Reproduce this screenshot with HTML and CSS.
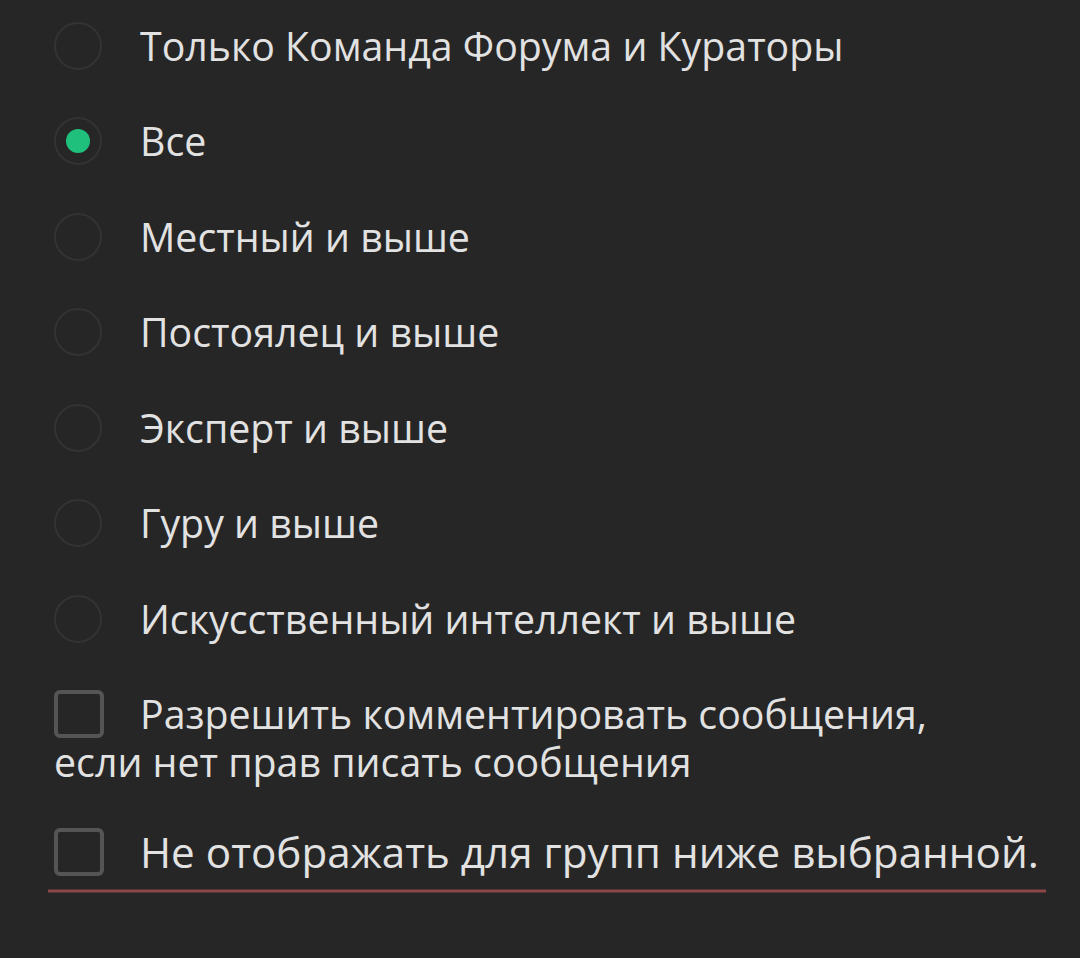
FILE: index.html
```html
<!DOCTYPE html>
<html lang="ru">
<head>
  <meta charset="UTF-8" />
  <meta name="viewport" content="width=device-width, initial-scale=1.0"/>
  <title>Права на сообщения</title>
  <link rel="stylesheet" href="styles.css">
</head>
<body>
  <div class="container">
    <ul class="radios">
      <li class="option"><span class="radio"></span>Только Команда Форума и Кураторы</li>
      <li class="option"><span class="radio checked"></span>Все</li>
      <li class="option"><span class="radio"></span>Местный и выше</li>
      <li class="option"><span class="radio"></span>Постоялец и выше</li>
      <li class="option"><span class="radio"></span>Эксперт и выше</li>
      <li class="option"><span class="radio"></span>Гуру и выше</li>
      <li class="option"><span class="radio"></span>Искусственный интеллект и выше</li>
    </ul>

    <p class="check first"><span class="box"></span>Разрешить комментировать сообщения,<br>если нет прав писать сообщения</p>
    <p class="check last"><span class="box"></span>Не отображать для групп ниже выбранной.</p>

    <div class="divider"></div>
  </div>
</body>
</html>
```

FILE: styles.css
```css
body {
  margin: 0;
  background-color: #262626;
  font-family: "Open Sans", "Noto Sans", sans-serif;
  color: #e2e2e2;
}
.container {
  width: 1010px;
  padding: 0 0 0 54px;
}
.radios {
  list-style: none;
  margin: -2px 0 0 0;
  padding: 0;
}
.option {
  display: flex;
  align-items: center;
  height: 95.5px;
  font-size: 39.3px;
}
.radio {
  width: 48px;
  height: 48px;
  box-sizing: border-box;
  border: 2px solid #333333;
  border-radius: 50%;
  margin-right: 38px;
  display: flex;
  align-items: center;
  justify-content: center;
  flex-shrink: 0;
}
.radio.checked::after {
  content: "";
  width: 24px;
  height: 24px;
  border-radius: 50%;
  background-color: #1fc07c;
}
.check {
  margin: 0;
  font-size: 39.3px;
  line-height: 48px;
}
.check.first {
  margin-top: 23px;
}
.check.last {
  margin-top: 42px;
  font-size: 42.2px;
}
.box {
  display: inline-block;
  width: 50px;
  height: 48px;
  box-sizing: border-box;
  border: 4px solid #555555;
  border-radius: 6px;
  margin-right: 36px;
  vertical-align: top;
}
.divider {
  width: 998px;
  margin: 13px 0 0 -6px;
  height: 2px;
  background-color: #8a4848;
  border-top: 1px solid #5a3535;
  border-bottom: 1px solid #5a3535;
}
```
